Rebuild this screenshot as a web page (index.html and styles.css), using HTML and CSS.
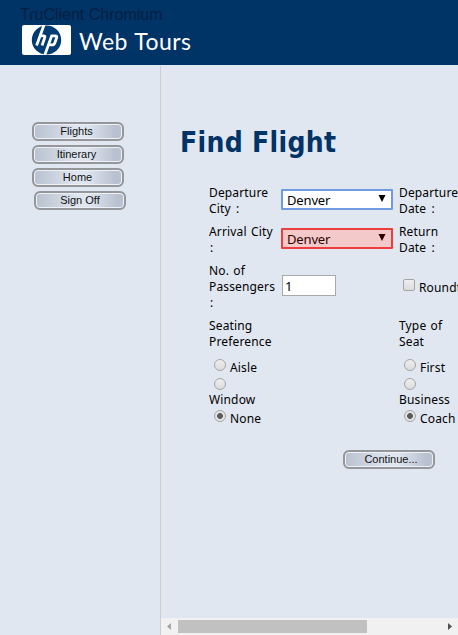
FILE: index.html
```html
<!DOCTYPE html>
<html lang="en">
<head>
<meta charset="utf-8">
<title>Web Tours</title>
<link rel="stylesheet" href="styles.css">
</head>
<body>
<header class="header">
  <div class="watermark">TruClient Chromium</div>
  <div class="brand">
    <svg class="logo" width="49" height="30" viewBox="0 0 49 30" aria-label="hp">
      <rect width="49" height="30" rx="2" fill="#fff"/>
      <ellipse cx="24.5" cy="15" rx="14.7" ry="14.5" fill="#003c74"/>
      <g fill="none" stroke="#fff" stroke-width="2.8">
        <path d="M22 0L14.6 20.5M18.5 10.8H21.5Q23.4 10.8 22.7 12.8L20 20.5"/>
        <path d="M22.8 30L29.7 10.8H33.2Q35.3 10.8 34.6 12.8L32.8 18Q32.1 19.9 30 19.9H27"/>
      </g>
    </svg>
    <span class="brand-name">Web Tours</span>
  </div>
</header>
<div class="frames">
  <nav class="sidebar">
    <button class="pill">Flights</button>
    <button class="pill">Itinerary</button>
    <button class="pill home">Home</button>
    <button class="pill shifted">Sign Off</button>
  </nav>
  <main class="main">
    <h1>Find Flight</h1>
    <form class="form">
      <div>Departure<br>City <span class="colon">:</span></div>
      <div class="select"><span>Denver</span><svg width="8" height="7" viewBox="0 0 8 7"><path d="M.5 0h7L4 7z"/></svg></div>
      <div>Departure<br>Date <span class="colon">:</span></div>

      <div>Arrival City<br><span class="colon">:</span></div>
      <div class="select invalid"><span>Denver</span><svg width="8" height="7" viewBox="0 0 8 7"><path d="M.5 0h7L4 7z" fill="#2c0000"/></svg></div>
      <div>Return<br>Date <span class="colon">:</span></div>

      <div>No. of<br>Passengers<br><span class="colon">:</span></div>
      <input class="count" value="1">
      <label class="round"><i class="check"></i>Roundtrip</label>

      <div>Seating<br>Preference</div>
      <div></div>
      <div>Type of<br>Seat</div>

      <div class="radios">
        <label class="line"><i class="radio"></i>Aisle</label>
        <label><span class="lone"><i class="radio"></i></span>Window</label>
        <label class="line"><i class="radio on"></i>None</label>
      </div>
      <div></div>
      <div class="radios">
        <label class="line"><i class="radio"></i>First</label>
        <label><span class="lone"><i class="radio"></i></span>Business</label>
        <label class="line"><i class="radio on"></i>Coach</label>
      </div>
    </form>
    <button class="pill continue">Continue...</button>
    <div class="scrollbar">
      <svg width="4" height="7" viewBox="0 0 4 7"><path d="M4 0v7L0 3.5z" fill="#a3a3a3"/></svg>
      <div class="track"><div class="thumb"></div></div>
      <svg width="4" height="7" viewBox="0 0 4 7"><path d="M0 0v7l4-3.5z" fill="#505050"/></svg>
    </div>
  </main>
</div>
</body>
</html>
```
FILE: styles.css
```css
* { box-sizing: border-box; }
body {
  margin: 0;
  width: 458px;
  height: 635px;
  overflow: hidden;
  display: flex;
  flex-direction: column;
  background: #e0e7f1;
  color: #000;
  font: 12px/16px "Noto Sans", sans-serif;
  letter-spacing: .15px;
  word-spacing: 1px;
}
.header { height: 65px; background: #003366; position: relative; padding: 25px 0 0 22px; flex: none; }
.watermark {
  position: absolute;
  left: 20px;
  top: 5px;
  font: 16px/19px "Liberation Sans", sans-serif;
  letter-spacing: 0;
  word-spacing: 0;
  color: #001f42;
}
.brand { display: flex; }
.logo { flex: none; }
.brand-name {
  margin-left: 8px;
  font: 400 23px/33px Lato, sans-serif;
  letter-spacing: .4px;
  color: #fff;
  white-space: nowrap;
}
.frames { display: flex; flex: 1; }
.sidebar {
  width: 161px;
  flex: none;
  margin-top: 1px;
  padding: 56px 0 0 32px;
  border-right: 1px solid #ccc;
  display: flex;
  flex-direction: column;
  gap: 4px;
}
.pill {
  display: block;
  width: 92px;
  height: 19px;
  padding: 0 3px 1px 0;
  border: 2px solid #949699;
  border-radius: 6px;
  background: linear-gradient(90deg, #b9c0cf, #dfe6f0 48%, #dfe6f0 60%, #b9c0cf 92%);
  box-shadow: inset 0 0 0 1px #eef2f8;
  color: #111;
  font: 11px/14px "Liberation Sans", sans-serif;
  text-align: center;
}
.home { padding-right: 1px; }
.shifted { margin-left: 2px; padding-right: 0; }
.main { flex: 1; min-width: 0; display: flex; flex-direction: column; overflow: hidden; }
h1 {
  margin: 61px 0 0 19px;
  height: 33px;
  color: #003366;
  font: bold 28px/34px "DejaVu Sans Condensed", "DejaVu Sans", sans-serif;
  font-stretch: condensed;
  letter-spacing: .3px;
  word-spacing: 0;
  white-space: nowrap;
}
.form {
  margin: 26px 0 0 48px;
  display: grid;
  grid-template-columns: 73px 111px 120px;
  grid-template-rows: 32px 32px 48px 32px 70px;
  row-gap: 7px;
  white-space: nowrap;
}
.form > :nth-child(3n) { margin-left: 6px; }
.colon { margin-left: 1px; }
.select {
  width: 112px;
  height: 21px;
  margin: 4px 0 0 -1px;
  padding: 0 5px 0 4px;
  border: 2px solid #709be0;
  border-radius: 1px;
  background: #fff;
  display: flex;
  align-items: center;
  justify-content: space-between;
  font-size: 13px;
  letter-spacing: -.15px;
}
.select svg { margin-top: -2px; }
.invalid { border-color: #ed3d3d; background: #f4c9c9; color: #2c0000; }
.count {
  width: 54px;
  height: 21px;
  margin-top: 12px;
  padding: 0 2px;
  border: 1px solid #a9a9a9;
  background: #fff;
  font: 13px/17px "Noto Sans", sans-serif;
}
.round { display: flex; padding: 16px 0 0 4px; line-height: 17px; }
.check {
  width: 12px;
  height: 12px;
  margin-right: 4px;
  border: 1px solid #a5a5a5;
  border-radius: 2px;
  background: linear-gradient(#eee, #dcdcdc);
}
.radio {
  width: 12px;
  height: 12px;
  flex: none;
  border: 1px solid #a5a5a5;
  border-radius: 50%;
  background: linear-gradient(#eee, #dcdcdc);
}
.radio.on { background: radial-gradient(circle, #5c5c5c 0 2.6px, #e4e4e4 3.2px); }
.radios label { display: block; }
.radios .line { display: flex; height: 19px; padding: 2px 0 0 5px; gap: 4px; line-height: 17px; }
.lone { display: flex; padding: 2px 0 2px 5px; height: 16px; }
.continue { margin: 23px 0 0 182px; padding: 0 0 1px 4px; flex: none; }
.scrollbar {
  height: 17px;
  flex: none;
  margin-top: auto;
  background: #f1f1f1;
  padding: 0 6px;
  display: flex;
  align-items: center;
}
.track { flex: 1; height: 13px; padding: 0 0 0 7px; }
.thumb { width: 189px; height: 13px; background: #c1c1c1; }
```
